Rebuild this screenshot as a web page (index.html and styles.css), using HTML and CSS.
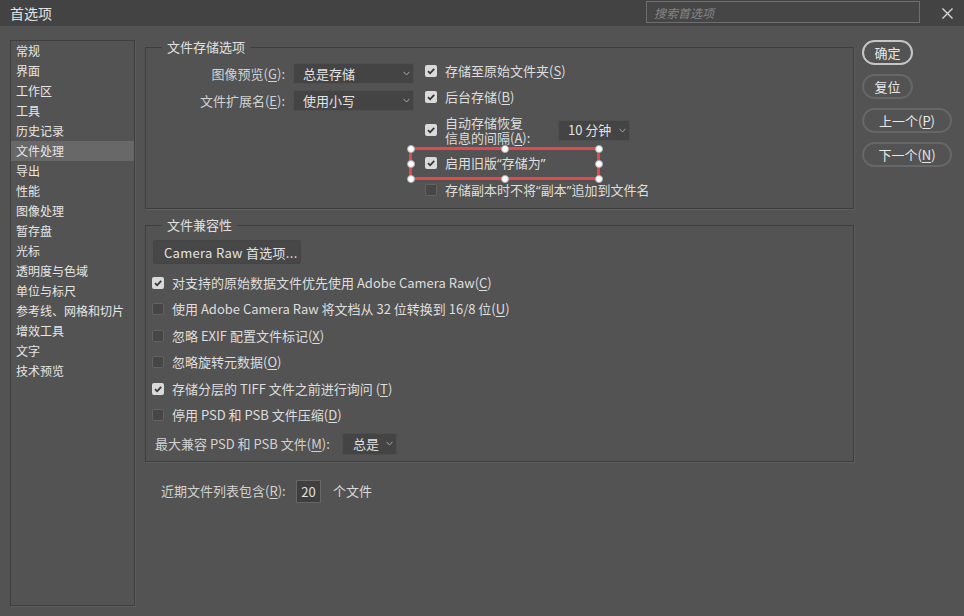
FILE: index.html
```html
<!DOCTYPE html>
<html lang="zh-CN">
<head>
    <meta charset="UTF-8">
    <meta name="viewport" content="width=device-width, initial-scale=1.0">
    <title>首选项</title>
    <link rel="stylesheet" href="styles.css">
</head>
<body>

<div class="titlebar">
    <span class="title">首选项</span>
    <input class="search" type="text" placeholder="搜索首选项">
    <span class="close">
        <svg width="11" height="11" viewBox="0 0 11 11"><path d="M0.5 0.5 L10.5 10.5 M10.5 0.5 L0.5 10.5" stroke="#d8d8d8" stroke-width="1.4" fill="none"/></svg>
    </span>
</div>

<div class="main">
    <ul class="nav">
        <li>常规</li>
        <li>界面</li>
        <li>工作区</li>
        <li>工具</li>
        <li>历史记录</li>
        <li class="active">文件处理</li>
        <li>导出</li>
        <li>性能</li>
        <li>图像处理</li>
        <li>暂存盘</li>
        <li>光标</li>
        <li>透明度与色域</li>
        <li>单位与标尺</li>
        <li>参考线、网格和切片</li>
        <li>增效工具</li>
        <li>文字</li>
        <li>技术预览</li>
    </ul>

    <div class="content">
        <fieldset class="group">
            <legend>文件存储选项</legend>
            <div class="save-body">
                <div class="save-fields">
                    <label>图像预览(<u>G</u>):</label>
                    <div class="select select-wide"><span>总是存储</span><svg class="chev" width="7" height="5" viewBox="0 0 7 5"><path d="M0.5 0.8 L3.5 4 L6.5 0.8" stroke="#a8a8a8" stroke-width="1" fill="none"/></svg></div>
                    <label>文件扩展名(<u>E</u>):</label>
                    <div class="select select-wide"><span>使用小写</span><svg class="chev" width="7" height="5" viewBox="0 0 7 5"><path d="M0.5 0.8 L3.5 4 L6.5 0.8" stroke="#a8a8a8" stroke-width="1" fill="none"/></svg></div>
                </div>
                <div class="save-checks">
                    <div class="check-row r1"><span class="box checked"><svg width="12" height="12" viewBox="0 0 12 12"><path d="M3 6.2 L5.1 8.3 L9.2 3.8" stroke="#353535" stroke-width="1.8" fill="none"/></svg></span>存储至原始文件夹(<u>S</u>)</div>
                    <div class="check-row r2"><span class="box checked"><svg width="12" height="12" viewBox="0 0 12 12"><path d="M3 6.2 L5.1 8.3 L9.2 3.8" stroke="#353535" stroke-width="1.8" fill="none"/></svg></span>后台存储(<u>B</u>)</div>
                    <div class="check-row r3">
                        <span class="box checked"><svg width="12" height="12" viewBox="0 0 12 12"><path d="M3 6.2 L5.1 8.3 L9.2 3.8" stroke="#353535" stroke-width="1.8" fill="none"/></svg></span>
                        <span class="two-line">自动存储恢复<br>信息的间隔(<u>A</u>):</span>
                        <div class="select select-interval"><span>10 分钟</span><svg class="chev" width="7" height="5" viewBox="0 0 7 5"><path d="M0.5 0.8 L3.5 4 L6.5 0.8" stroke="#a8a8a8" stroke-width="1" fill="none"/></svg></div>
                    </div>
                    <div class="check-row r4">
                        <span class="box checked"><svg width="12" height="12" viewBox="0 0 12 12"><path d="M3 6.2 L5.1 8.3 L9.2 3.8" stroke="#353535" stroke-width="1.8" fill="none"/></svg></span>启用旧版<span class="q">“</span>存储为<span class="q">”</span>
                        <span class="highlight">
                            <i class="handle h-tl"></i><i class="handle h-tm"></i><i class="handle h-tr"></i>
                            <i class="handle h-ml"></i><i class="handle h-mr"></i>
                            <i class="handle h-bl"></i><i class="handle h-bm"></i><i class="handle h-br"></i>
                        </span>
                    </div>
                    <div class="check-row r5"><span class="box"></span>存储副本时不将<span class="q">“</span>副本<span class="q">”</span>追加到文件名</div>
                </div>
            </div>
        </fieldset>

        <fieldset class="group group-compat">
            <legend>文件兼容性</legend>
            <button class="raw-button">Camera Raw 首选项...</button>
            <div class="compat-list">
                <div class="check-row"><span class="box checked"><svg width="12" height="12" viewBox="0 0 12 12"><path d="M3 6.2 L5.1 8.3 L9.2 3.8" stroke="#353535" stroke-width="1.8" fill="none"/></svg></span>对支持的原始数据文件优先使用 Adobe Camera Raw(<u>C</u>)</div>
                <div class="check-row"><span class="box"></span>使用 Adobe Camera Raw 将文档从 32 位转换到 16/8 位(<u>U</u>)</div>
                <div class="check-row"><span class="box"></span>忽略 EXIF 配置文件标记(<u>X</u>)</div>
                <div class="check-row"><span class="box"></span>忽略旋转元数据(<u>O</u>)</div>
                <div class="check-row"><span class="box checked"><svg width="12" height="12" viewBox="0 0 12 12"><path d="M3 6.2 L5.1 8.3 L9.2 3.8" stroke="#353535" stroke-width="1.8" fill="none"/></svg></span>存储分层的 TIFF 文件之前进行询问 (<u>T</u>)</div>
                <div class="check-row"><span class="box"></span>停用 PSD 和 PSB 文件压缩(<u>D</u>)</div>
            </div>
            <div class="compat-max">
                <label>最大兼容 PSD 和 PSB 文件(<u>M</u>):</label>
                <div class="select select-small"><span>总是</span><svg class="chev" width="7" height="5" viewBox="0 0 7 5"><path d="M0.5 0.8 L3.5 4 L6.5 0.8" stroke="#a8a8a8" stroke-width="1" fill="none"/></svg></div>
            </div>
        </fieldset>

        <div class="recent">
            <label>近期文件列表包含(<u>R</u>):</label>
            <input class="num" type="text" value="20">
            <span class="unit">个文件</span>
        </div>
    </div>

    <div class="buttons">
        <button class="btn btn-default">确定</button>
        <button class="btn">复位</button>
        <button class="btn btn-wide">上一个(<u>P</u>)</button>
        <button class="btn btn-wide">下一个(<u>N</u>)</button>
    </div>
</div>

</body>
</html>
```

FILE: styles.css
```css
body {
    margin: 0;
    padding: 0;
    width: 964px;
    height: 616px;
    overflow: hidden;
    background-color: #535353;
    color: #dadada;
    font-family: "Noto Sans CJK SC", "Noto Sans", sans-serif;
    font-size: 13px;
    line-height: 20px;
}

u {
    text-underline-offset: 2px;
}

.q {
    font-family: "Noto Sans", sans-serif;
}

/* title bar */

.titlebar {
    height: 26px;
    background-color: #434343;
    display: flex;
    align-items: center;
    padding-left: 10px;
}

.title {
    flex: 1;
    font-size: 14px;
    color: #e2e2e2;
}

.search {
    width: 274px;
    height: 22px;
    box-sizing: border-box;
    margin-top: -2px;
    border: 1px solid #6e6e6e;
    background-color: #464646;
    padding: 0 7px;
    font-family: inherit;
    font-size: 12px;
    color: #ddd;
    outline: none;
}

.search::placeholder {
    color: #858585;
    font-style: italic;
}

.close {
    display: flex;
    margin-left: 22px;
    margin-right: 11px;
}

/* layout */

.main {
    display: flex;
    align-items: flex-start;
}

.nav {
    list-style: none;
    margin: 14px 0 0 10px;
    padding: 0;
    width: 125px;
    height: 566px;
    box-sizing: border-box;
    border: 1px solid #3f3f3f;
    box-shadow: 1px 1px 0 #5c5c5c;
}

.nav li {
    height: 20px;
    line-height: 19px;
    padding-left: 5px;
    font-size: 12px;
    color: #e6e6e6;
}

.nav li.active {
    background-color: #686868;
}

.content {
    width: 709px;
    margin: 12px 0 0 10px;
}

/* groups */

.group {
    margin: 0;
    padding: 0 0 8px 0;
    border: 1px solid #3e3e3e;
    box-shadow: 1px 1px 0 #5e5e5e;
    min-width: 0;
}

.group legend {
    margin-left: 16px;
    padding: 0 5px;
    line-height: 18px;
    color: #e0e0e0;
}

.save-body {
    display: flex;
    align-items: flex-start;
}

.save-fields {
    display: grid;
    grid-template-columns: 139px 121px;
    column-gap: 8px;
    row-gap: 6px;
    margin-top: 7px;
}

.save-fields label {
    text-align: right;
    line-height: 21px;
    color: #d2d2d2;
}

.select {
    height: 21px;
    box-sizing: border-box;
    display: flex;
    align-items: center;
    justify-content: space-between;
    background-color: #444;
    border: 1px solid #4f4f4f;
    border-radius: 2px;
    color: #e2e2e2;
}

.select-wide {
    padding: 0 3px 0 9px;
}

.select-interval {
    width: 72px;
    padding: 0 3px 0 9px;
}

.select-small {
    width: 55px;
    height: 22px;
    padding: 0 3px 0 10px;
}

.save-checks {
    margin-left: 11px;
}

.check-row {
    display: flex;
    align-items: center;
    height: 20px;
    color: #dedede;
    position: relative;
    white-space: nowrap;
}

.box {
    width: 12px;
    height: 12px;
    box-sizing: border-box;
    border-radius: 2px;
    margin-right: 8px;
    background-color: #464646;
    border: 1px solid #626262;
    flex-shrink: 0;
}

.box.checked {
    background-color: #dadada;
    border: none;
}

.box svg {
    display: block;
}

.r1 { margin-top: 5px; }
.r2 { margin-top: 6px; }
.r3 { margin-top: 8px; height: 30px; }
.r4 { margin-top: 8px; }
.r5 { margin-top: 7px; }

.two-line {
    width: 113px;
    line-height: 15px;
}

/* red annotation box */

.highlight {
    position: absolute;
    left: -16px;
    top: -6px;
    width: 191px;
    height: 33px;
    box-sizing: border-box;
    border: 3px solid #e6474b;
}

.handle {
    position: absolute;
    width: 8px;
    height: 8px;
    box-sizing: border-box;
    border-radius: 50%;
    background-color: #fff;
    border: 1px solid #b0b0b0;
}

.h-tl, .h-tm, .h-tr { top: -5.5px; }
.h-bl, .h-bm, .h-br { bottom: -5.5px; }
.h-ml, .h-mr { top: calc(50% - 4px); }
.h-tl, .h-ml, .h-bl { left: -5.5px; }
.h-tr, .h-mr, .h-br { right: -5.5px; }
.h-tm, .h-bm { left: calc(50% - 4px); }

/* compatibility */

.group-compat {
    margin-top: 7px;
    padding-bottom: 6px;
}

.raw-button {
    display: block;
    margin: 6px 0 0 7px;
    width: 148px;
    height: 24px;
    padding: 0 10px;
    text-align: left;
    white-space: nowrap;
    background-color: #474747;
    border: 1px solid #454545;
    border-radius: 2px;
    color: #e2e2e2;
    font-family: inherit;
    font-size: 13px;
    letter-spacing: 0.3px;
}

.compat-list {
    margin: 9px 0 0 6px;
    display: flex;
    flex-direction: column;
    gap: 6.4px;
}

.compat-max {
    display: flex;
    align-items: center;
    margin: 8px 0 0 9px;
}

.compat-max label {
    width: 187px;
    color: #d2d2d2;
}

/* recent files */

.recent {
    display: flex;
    align-items: center;
    margin-top: 18px;
    padding-left: 16px;
}

.recent label {
    width: 135px;
    color: #d2d2d2;
}

.num {
    width: 25px;
    height: 23px;
    box-sizing: border-box;
    padding: 0;
    text-align: center;
    background-color: #3f3f3f;
    border: 1px solid #666;
    color: #e2e2e2;
    font-family: inherit;
    font-size: 13px;
    outline: none;
}

.unit {
    margin-left: 12px;
}

/* right buttons */

.buttons {
    display: flex;
    flex-direction: column;
    align-items: flex-start;
    gap: 9px;
    margin: 14px 0 0 8px;
}

.btn {
    width: 51px;
    height: 25px;
    padding: 0;
    box-sizing: border-box;
    border: 2px solid #676767;
    border-radius: 13px;
    background-color: #535353;
    color: #e8e8e8;
    font-family: inherit;
    font-size: 13px;
    line-height: 20px;
}

.btn-default {
    border-color: #c6c6c6;
}

.btn-wide {
    width: 90px;
}
```
